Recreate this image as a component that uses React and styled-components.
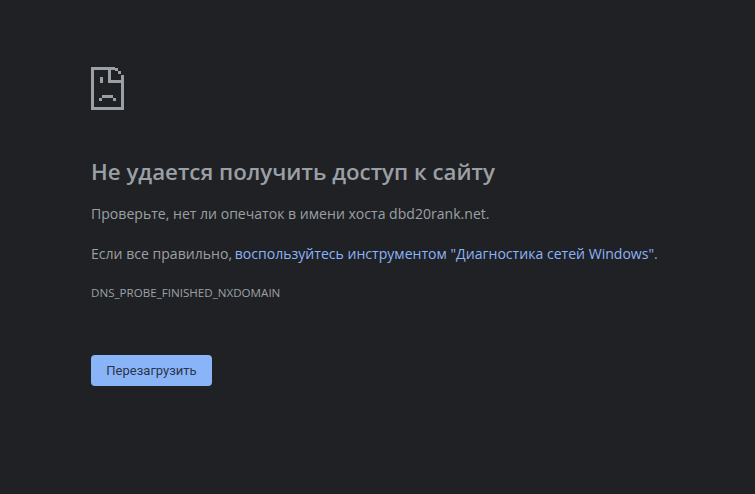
import React from 'react'
import styled, { createGlobalStyle } from 'styled-components'

const Global = createGlobalStyle`
    html, body {
        margin: 0;
        padding: 0;
        background-color: #202124;
    }
`

const Page = styled.div`
    box-sizing: border-box;
    width: 755px;
    height: 494px;
    overflow: hidden;
    padding: 67px 0 0 91px;
    background-color: #202124;
    color: #9aa0a6;
    font-family: "Open Sans", "Noto Sans", sans-serif;
    font-size: 14.07px;
`

const Icon = styled.svg`
    display: block;
    width: 33px;
    height: 43px;
`

const Title = styled.h1`
    margin: 46px 0 0;
    font-size: 22.3px;
    line-height: 32px;
    font-weight: 600;
    color: #9aa0a6;
`

const Paragraph = styled.p`
    margin: ${props => props.top}px 0 0;
    line-height: 20px;
    white-space: nowrap;
`

const Link = styled.a`
    color: #8ab4f8;
    margin-left: -1px;
`

const Code = styled.div`
    margin-top: 21px;
    font-size: 11.6px;
    line-height: 16px;
    text-transform: uppercase;
`

const ReloadButton = styled.button`
    display: block;
    width: 121px;
    height: 31px;
    margin-top: 54px;
    padding: 0;
    border: 0;
    border-radius: 4px;
    background-color: #8ab4f8;
    color: #2b3548;
    font-family: Roboto, sans-serif;
    font-size: 13px;
`

export default function App() {
    return (
        <Page>
            <Global />
            <Icon viewBox='0 0 33 43' fill='#9aa0a6'>
                <path d='M0 0h24v3H3v37h27V13h3v30H0z' />
                <path d='M17 0h3v13h13v3H17z' />
                <path d='M24 1h3v3h-3zM27 4h3v3h-3zM30 8h3v5h-3z' />
                <path d='M9 10h3v6H9zM11 28h11v3H11zM8 31h3v3H8zM22 31h3v3h-3z' />
            </Icon>
            <Title>Не удается получить доступ к сайту</Title>
            <Paragraph top={16}>Проверьте, нет ли опечаток в имени хоста dbd20rank.net.</Paragraph>
            <Paragraph top={20}>
                Если все правильно, <Link>воспользуйтесь инструментом "Диагностика сетей Windows"</Link>.
            </Paragraph>
            <Code>DNS_PROBE_FINISHED_NXDOMAIN</Code>
            <ReloadButton>Перезагрузить</ReloadButton>
        </Page>
    )
}
